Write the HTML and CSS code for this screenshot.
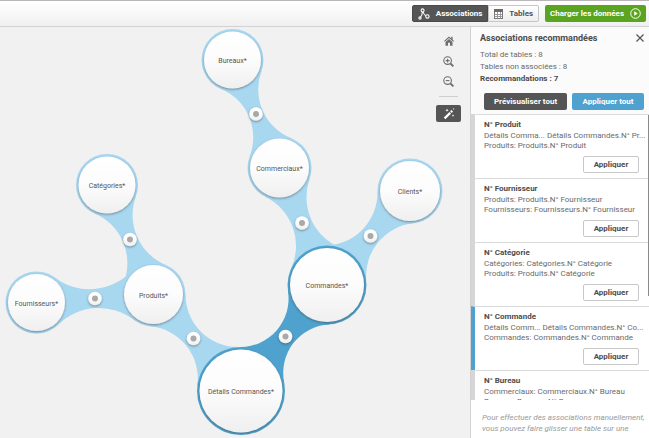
FILE: index.html
```html
<!DOCTYPE html>
<html lang="fr">
<head>
  <meta charset="UTF-8" />
  <title>Gestionnaire de données</title>
  <link rel="stylesheet" href="styles.css">
</head>
<body>
  <header class="topbar">
    <div class="tabs">
      <button class="tab active">
        <svg width="12" height="12" viewBox="0 0 12 12" fill="none" stroke="#fff" stroke-width="1.1">
          <circle cx="4.6" cy="2.4" r="1.5"/><circle cx="2" cy="10" r="1.1"/><circle cx="9.4" cy="8.4" r="1.7"/>
          <path d="M4.4 4Q4.4 7 2.6 8.9M5.2 4Q5.8 6.6 7.7 7.7"/>
        </svg>
        Associations
      </button>
      <button class="tab">
        <svg width="9" height="10" viewBox="0 0 9 10">
          <rect x="0.5" y="0.5" width="8" height="9" fill="#fff" stroke="#777"/>
          <path d="M0 0h9v3H0z" fill="#6a6a6a"/>
          <path d="M3.5 3v7M6.5 3v7M0 5.5h9M0 7.5h9" stroke="#888" stroke-width="0.8"/>
        </svg>
        Tables
      </button>
    </div>
    <button class="load">
      Charger les données
      <svg width="11" height="11" viewBox="0 0 11 11">
        <circle cx="5.5" cy="5.5" r="4.8" fill="none" stroke="#fff"/>
        <path d="M4.2 3.2L7.7 5.5L4.2 7.8z" fill="#fff"/>
      </svg>
    </button>
  </header>

  <div class="main">
    <main class="canvas">
      <svg class="graph" id="graph" width="440" height="411" viewBox="0 27 440 411">
        <defs>
          <linearGradient id="bulle" x1="0" y1="0" x2="0" y2="1">
            <stop offset="0" stop-color="#ffffff"/>
            <stop offset="0.5" stop-color="#fcfcfc"/>
            <stop offset="1" stop-color="#efefef"/>
          </linearGradient>
          <filter id="ombre" x="-20%" y="-20%" width="140%" height="150%">
            <feDropShadow dx="0" dy="1" stdDeviation="0.8" flood-color="#333" flood-opacity="0.5"/>
          </filter>
        </defs>
      </svg>
      <div class="tools">
        <button class="tool" aria-label="Accueil">
          <svg width="10" height="10" viewBox="0 0 10 10" fill="#6e6e6e">
            <path d="M5 0.4L0 4.9L0.8 5.7L5 2L9.2 5.7L10 4.9L8.6 3.6V0.8H7.2V2.4z"/>
            <path d="M5 2.9L1.5 6V9.8H4V6.8H6V9.8H8.5V6z"/>
          </svg>
        </button>
        <button class="tool" aria-label="Zoom avant">
          <svg width="11" height="11" viewBox="0 0 11 11" fill="none" stroke="#6e6e6e" stroke-width="1.1">
            <circle cx="4.6" cy="4.6" r="3.8"/><path d="M7.5 7.5L10.4 10.4" stroke-width="1.8"/><path d="M2.7 4.6H6.5M4.6 2.7V6.5"/>
          </svg>
        </button>
        <button class="tool" aria-label="Zoom arrière">
          <svg width="11" height="11" viewBox="0 0 11 11" fill="none" stroke="#6e6e6e" stroke-width="1.1">
            <circle cx="4.6" cy="4.6" r="3.8"/><path d="M7.5 7.5L10.4 10.4" stroke-width="1.8"/><path d="M2.7 4.6H6.5"/>
          </svg>
        </button>
        <hr class="separator">
        <button class="tool wand" aria-label="Recommandations">
          <svg width="12" height="12" viewBox="0 0 12 12" fill="#fff">
            <path d="M0.8 9.6L6.5 3.9L8.1 5.5L2.4 11.2z"/>
            <path d="M7.1 3.3L8.4 2L10 3.6L8.7 4.9z"/>
            <path d="M4 0.6l.5 1.1 1.1.5-1.1.5L4 3.8l-.5-1.1-1.1-.5 1.1-.5zM10 6.2l.4 1 1 .4-1 .4-.4 1-.4-1-1-.4 1-.4zM10.6 0l.3.7.7.3-.7.3-.3.7-.3-.7-.7-.3.7-.3z"/>
          </svg>
        </button>
      </div>
    </main>

    <aside class="panel">
      <div class="summary">
        <div class="panel-title">
          <h2>Associations recommandées</h2>
          <button class="close" aria-label="Fermer">
            <svg width="8" height="8" viewBox="0 0 8 8" stroke="#555" stroke-width="1.2"><path d="M0.5 0.5L7.5 7.5M7.5 0.5L0.5 7.5"/></svg>
          </button>
        </div>
        <p>Total de tables : 8</p>
        <p>Tables non associées : 8</p>
        <p class="strong">Recommandations : 7</p>
        <div class="actions">
          <button class="preview">Prévisualiser tout</button>
          <button class="apply-all">Appliquer tout</button>
        </div>
      </div>

      <div class="list">
        <section class="item">
          <h3>N° Produit</h3>
          <p>Détails Comma... Détails Commandes.N° Pr...</p>
          <p>Produits: Produits.N° Produit</p>
          <button class="apply">Appliquer</button>
        </section>
        <section class="item">
          <h3>N° Fournisseur</h3>
          <p>Produits: Produits.N° Fournisseur</p>
          <p>Fournisseurs: Fournisseurs.N° Fournisseur</p>
          <button class="apply">Appliquer</button>
        </section>
        <section class="item">
          <h3>N° Catégorie</h3>
          <p>Catégories: Catégories.N° Catégorie</p>
          <p>Produits: Produits.N° Catégorie</p>
          <button class="apply">Appliquer</button>
        </section>
        <section class="item selected">
          <h3>N° Commande</h3>
          <p>Détails Comm... Détails Commandes.N° Co...</p>
          <p>Commandes: Commandes.N° Commande</p>
          <button class="apply">Appliquer</button>
        </section>
        <section class="item">
          <h3>N° Bureau</h3>
          <p>Commerciaux: Commerciaux.N° Bureau</p>
          <p>Bureaux: Bureaux.N° Bureau</p>
        </section>
        <div class="scrollbar"></div>
      </div>

      <p class="hint">Pour effectuer des associations manuellement, vous pouvez faire glisser une table sur une</p>
    </aside>
  </div>
  <script src="script.js"></script>
</body>
</html>
```
FILE: styles.css
```css
* {
  box-sizing: border-box;
}
body {
  margin: 0;
  height: 100vh;
  display: flex;
  flex-direction: column;
  overflow: hidden;
  font-family: Roboto, "Liberation Sans", sans-serif;
  font-size: 8px;
  color: #6a6a6a;
  background: #f1f1f1;
}
h2, h3, p {
  margin: 0;
}
button {
  font: inherit;
  font-weight: 700;
  padding: 0;
  border: none;
  background: none;
}
svg {
  display: block;
  flex: none;
}
.topbar {
  display: flex;
  flex: none;
  justify-content: flex-end;
  align-items: center;
  gap: 6px;
  height: 27px;
  padding-right: 3px;
  border-top: 1px solid #b9b5b9;
  border-bottom: 1px solid #d2d2d2;
  background: linear-gradient(#fff, #f0f0f0);
}
.tabs {
  display: flex;
}
.tab {
  display: flex;
  align-items: center;
  justify-content: center;
  gap: 6px;
  height: 17px;
  padding: 0 5px;
  color: #555;
  background: linear-gradient(#fff, #eee);
  border: 1px solid #c6c6c6;
  border-radius: 0 2px 2px 0;
}
.tab.active {
  color: #fff;
  background: #555;
  border-color: #4a4a4a;
  border-radius: 2px 0 0 2px;
}
.load {
  display: flex;
  align-items: center;
  gap: 6px;
  height: 17px;
  padding: 0 5px;
  color: #fff;
  background: #5ba41f;
  border-radius: 2px;
}
.main {
  display: flex;
  flex: 1;
  min-height: 0;
}
.canvas {
  display: flex;
  flex: 1;
  justify-content: space-between;
  min-width: 0;
}
.graph {
  overflow: visible;
}
.tools {
  display: flex;
  flex-direction: column;
  align-items: center;
  gap: 8px;
  padding: 8px 9px 0 0;
  margin-left: -4px;
}
.tool {
  display: flex;
  align-items: center;
  justify-content: center;
  width: 25px;
  height: 12px;
}
.separator {
  width: 19px;
  margin: 1px 0 0;
  border: none;
  border-top: 1px solid #cfcfcf;
}
.wand {
  height: 17px;
  border-radius: 2px;
  background: #555;
}
.panel {
  display: flex;
  flex-direction: column;
  width: 179px;
  flex: none;
  border-left: 1px solid #d2d2d2;
  background: #fff;
}
.summary {
  flex: none;
  padding: 5px 5px 4px 9px;
  line-height: 12px;
  background: #fbfbfb;
}
.panel-title {
  display: flex;
  justify-content: space-between;
  align-items: center;
  height: 12px;
  margin-bottom: 5px;
}
h2 {
  font-size: 9px;
  color: #4c4c4c;
}
.strong {
  font-weight: 700;
  color: #4c4c4c;
}
.actions {
  display: flex;
  justify-content: flex-end;
  gap: 5px;
  margin-top: 8px;
}
.actions button {
  height: 17px;
  border-radius: 2px;
  color: #fff;
}
.actions .preview {
  width: 83px;
  background: #555;
}
.actions .apply-all {
  width: 72px;
  background: #4fa2cf;
}
.list {
  position: relative;
  flex: 1;
  min-height: 0;
  overflow: hidden;
}
.item {
  height: 64px;
  padding: 4px 10px 0 9px;
  border-left: 4px solid #d6d6d6;
  border-top: 1px solid #dcdcdc;
  line-height: 10px;
  white-space: nowrap;
}
.item.selected {
  border-left-color: #4fa2cf;
}
h3 {
  font-size: 8px;
  line-height: 12px;
  color: #4c4c4c;
}
.apply {
  display: block;
  width: 56px;
  height: 17px;
  margin: 5px 0 0 auto;
  color: #4c4c4c;
  background: #fff;
  border: 1px solid #c8c8c8;
  border-radius: 2px;
}
.scrollbar {
  position: absolute;
  top: 1px;
  right: 0;
  width: 1px;
  height: 181px;
  background: #8a8a8a;
}
.hint {
  flex: none;
  height: 38px;
  padding: 12px 4px 0 11px;
  line-height: 11px;
  font-style: italic;
  color: #999;
}
.node-label {
  font-size: 7px;
  fill: #555;
  text-anchor: middle;
}
```
FILE: script.js
```js
const LIGHT = '#a8d7f0';
const DARK = '#4fa2cd';

const nodes = {
  bureaux: { x: 232.5, y: 60, r: 31, label: 'Bureaux*' },
  commerciaux: { x: 279.5, y: 168, r: 32, label: 'Commerciaux*' },
  clients: { x: 410, y: 191, r: 32.5, label: 'Clients*' },
  categories: { x: 107, y: 185, r: 31, label: 'Catégories*' },
  produits: { x: 153.5, y: 294.5, r: 32, label: 'Produits*' },
  fournisseurs: { x: 36.5, y: 302.5, r: 31, label: 'Fournisseurs*' },
  commandes: { x: 327, y: 285, r: 39.5, label: 'Commandes*', dark: true },
  details: { x: 241, y: 391, r: 44, label: 'Détails Commandes*', dark: true }
};

// waist = half of the link's width at its narrowest point
const links = [
  { a: 'bureaux', b: 'commerciaux', waist: 7.5, x: 256, y: 114 },
  { a: 'commerciaux', b: 'commandes', waist: 10, x: 302, y: 223 },
  { a: 'clients', b: 'commandes', waist: 10, x: 370.5, y: 236 },
  { a: 'categories', b: 'produits', waist: 7.5, x: 130, y: 239.5 },
  { a: 'fournisseurs', b: 'produits', waist: 9.5, x: 95, y: 298.5 },
  { a: 'produits', b: 'details', waist: 10, x: 193.5, y: 338.5 },
  { a: 'details', b: 'commandes', waist: 10.5, x: 285.5, y: 336.5, dark: true }
];

const graph = document.getElementById('graph');

function add(name, attrs, text) {
  const el = document.createElementNS('http://www.w3.org/2000/svg', name);
  for (const key in attrs) el.setAttribute(key, attrs[key]);
  if (text) el.textContent = text;
  graph.appendChild(el);
}

// Each side of a link is an arc of radius R tangent to both circles
function linkPath(a, b, h) {
  const d = Math.hypot(b.x - a.x, b.y - a.y);
  const ux = (b.x - a.x) / d;
  const uy = (b.y - a.y) / d;
  const offset = R => Math.sqrt((a.r + R) ** 2 - (R + h) ** 2);
  const other = R => Math.sqrt((b.r + R) ** 2 - (R + h) ** 2);
  let lo = 0, hi = 500;
  for (let i = 0; i < 40; i++) {
    const mid = (lo + hi) / 2;
    if (offset(mid) + other(mid) < d) lo = mid; else hi = mid;
  }
  const R = lo;
  const t = offset(R);
  const point = (n, side) => {
    const cx = a.x + ux * t - uy * side * (R + h);
    const cy = a.y + uy * t + ux * side * (R + h);
    const k = n.r / (n.r + R);
    return (n.x + (cx - n.x) * k) + ' ' + (n.y + (cy - n.y) * k);
  };
  return `M${a.x} ${a.y}L${point(a, 1)}A${R} ${R} 0 0 1 ${point(b, 1)}` +
    `L${b.x} ${b.y}L${point(b, -1)}A${R} ${R} 0 0 1 ${point(a, -1)}Z`;
}

function drawLayer(dark) {
  const color = dark ? DARK : LIGHT;
  links.filter(l => !!l.dark === dark).forEach(l => {
    add('path', { d: linkPath(nodes[l.a], nodes[l.b], l.waist), fill: color });
  });
  Object.values(nodes).filter(n => !!n.dark === dark).forEach(n => {
    add('circle', { cx: n.x, cy: n.y, r: n.r, fill: color });
  });
}

drawLayer(false);
drawLayer(true);

Object.values(nodes).forEach(n => {
  add('circle', { cx: n.x, cy: n.y, r: n.r - 2.5, fill: 'url(#bulle)', filter: 'url(#ombre)' });
  add('text', { x: n.x, y: n.y + 3, class: 'node-label' }, n.label);
});
links.forEach(l => {
  add('circle', { cx: l.x, cy: l.y, r: 6.8, fill: 'url(#bulle)', filter: 'url(#ombre)' });
  add('circle', { cx: l.x, cy: l.y, r: 3, fill: '#a9a9a9' });
});
```
